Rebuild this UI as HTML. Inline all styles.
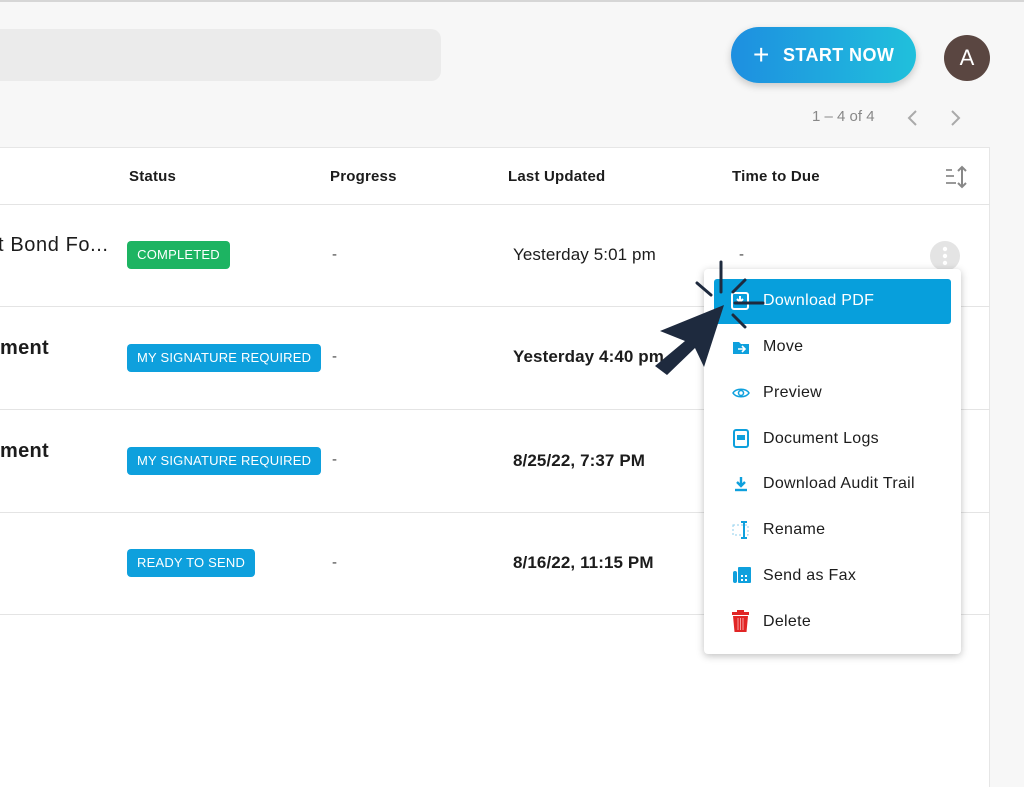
<!DOCTYPE html>
<html><head><meta charset="utf-8"><style>
*{margin:0;padding:0;box-sizing:border-box}
body{width:1024px;height:768px;overflow:hidden;background:#f7f7f7;font-family:"Liberation Sans",sans-serif;color:#1c1c1c;position:relative}
.a{position:absolute}
.topline{left:0;top:0;width:1024px;height:2px;background:#d6d6d6}
.search{left:-10px;top:29px;width:451px;height:52px;background:#ebebeb;border-radius:10px}
.btn{left:731px;top:27px;width:185px;height:56px;border-radius:28px;background:linear-gradient(90deg,#1e8fe0,#20c0dc);box-shadow:0 3px 8px rgba(0,0,0,.2);color:#fff;font-size:18px;font-weight:bold;letter-spacing:.4px;line-height:56px;padding-left:52px;white-space:nowrap}
.plus{left:22px;top:0;font-size:28px;font-weight:normal}
.av{left:944px;top:35px;width:46px;height:46px;border-radius:50%;background:#5a4641;color:#fff;font-size:22px;text-align:center;line-height:46px}
.pg{left:812px;top:108px;font-size:15px;color:#888}
.card{left:0;top:147px;width:990px;height:640px;background:#fff;border-right:1px solid #e6e6e6;border-top:1px solid #e6e6e6}
.hd{top:168px;font-size:15px;font-weight:bold;letter-spacing:.2px}
.line{left:0;width:990px;height:1px;background:#e4e4e4}
.nm{left:0;font-size:20px;font-weight:bold;white-space:nowrap;letter-spacing:.3px}
.tag{height:28px;border-radius:4px;color:#fff;font-size:13px;line-height:28px;padding:0 10px;letter-spacing:.2px;white-space:nowrap;text-align:center}
.dash{font-size:15px;color:#444}
.dt{font-size:17px;font-weight:bold;white-space:nowrap;letter-spacing:.1px}
.menu{left:704px;top:269px;width:257px;height:385px;background:#fff;border-radius:4px;box-shadow:0 2px 8px rgba(0,0,0,.25)}
.mi{left:735px;font-size:16px;white-space:nowrap;letter-spacing:.3px}
.mi span{position:absolute;left:28px;top:0}
.sel{left:714px;top:279px;width:237px;height:45px;background:#079fdc;border-radius:3px}
</style></head><body>
<div class="a topline"></div>
<div class="a search"></div>
<div class="a btn"><span class="a plus">+</span>START NOW</div>
<div class="a av">A</div>
<div class="a pg">1 – 4 of 4</div>
<svg class="a" style="left:900px;top:108px" width="70" height="20"><path d="M16 3 L9 10 L16 17 M52 3 L59 10 L52 17" fill="none" stroke="#aaa" stroke-width="2"/></svg>
<div class="a card"></div>
<div class="a hd" style="left:129px">Status</div>
<div class="a hd" style="left:330px">Progress</div>
<div class="a hd" style="left:508px">Last Updated</div>
<div class="a hd" style="left:732px">Time to Due</div>
<svg class="a" style="left:944px;top:165px" width="26" height="24"><path d="M2 5h6M2 11h8M2 18h10" stroke="#999" stroke-width="2"/><path d="M18 2v20M14 6l4-4 4 4M14 18l4 4 4-4" stroke="#888" stroke-width="2" fill="none"/></svg>
<div class="a line" style="top:204px"></div>
<div class="a line" style="top:306px"></div>
<div class="a line" style="top:409px"></div>
<div class="a line" style="top:512px"></div>
<div class="a line" style="top:614px"></div>

<div class="a nm" style="top:234px;font-weight:normal;left:-2px;letter-spacing:.6px">t Bond Fo...</div>
<div class="a tag" style="left:127px;top:241px;background:#1db462;width:103px">COMPLETED</div>
<div class="a dash" style="left:332px;top:246px">-</div>
<div class="a dt" style="left:513px;top:245px;font-weight:normal">Yesterday 5:01 pm</div>
<div class="a dash" style="left:739px;top:246px">-</div>
<div class="a" style="left:930px;top:241px;width:30px;height:30px;border-radius:50%;background:#e4e4e4"></div>
<svg class="a" style="left:930px;top:241px" width="30" height="30"><circle cx="15" cy="8" r="2.2" fill="#fff"/><circle cx="15" cy="15" r="2.2" fill="#fff"/><circle cx="15" cy="22" r="2.2" fill="#fff"/></svg>

<div class="a nm" style="top:337px">ment</div>
<div class="a tag" style="left:127px;top:344px;background:#0ea0dd;width:194px">MY SIGNATURE REQUIRED</div>
<div class="a dash" style="left:332px;top:348px">-</div>
<div class="a dt" style="left:513px;top:347px">Yesterday 4:40 pm</div>

<div class="a nm" style="top:440px">ment</div>
<div class="a tag" style="left:127px;top:447px;background:#0ea0dd;width:194px">MY SIGNATURE REQUIRED</div>
<div class="a dash" style="left:332px;top:451px">-</div>
<div class="a dt" style="left:513px;top:451px">8/25/22, 7:37 PM</div>

<div class="a tag" style="left:127px;top:549px;background:#0ea0dd;width:128px">READY TO SEND</div>
<div class="a dash" style="left:332px;top:554px">-</div>
<div class="a dt" style="left:513px;top:553px">8/16/22, 11:15 PM</div>

<div class="a menu"></div>
<div class="a sel"></div>
<svg class="a" style="left:731px;top:292px" width="18" height="18"><rect x="1" y="1" width="16" height="16" rx="2" fill="none" stroke="#fff" stroke-width="2"/><path d="M9 4v6M6 7l3 3 3-3" stroke="#fff" stroke-width="2" fill="none"/></svg>
<div class="a mi" style="top:292px;color:#fff"><span>Download PDF</span></div>
<svg class="a" style="left:733px;top:340px" width="16" height="14"><path d="M0 2h6l2 2h8v10H0z" fill="#0ea0dd"/><path d="M5 9h6M9 6l3 3-3 3" stroke="#fff" stroke-width="1.6" fill="none"/></svg>
<div class="a mi" style="top:338px"><span>Move</span></div>
<svg class="a" style="left:732px;top:386px" width="18" height="14"><path d="M1 7C4 2 14 2 17 7C14 12 4 12 1 7z" fill="none" stroke="#0ea0dd" stroke-width="1.5"/><circle cx="9" cy="7" r="2.5" fill="none" stroke="#0ea0dd" stroke-width="1.5"/></svg>
<div class="a mi" style="top:384px"><span>Preview</span></div>
<svg class="a" style="left:733px;top:429px" width="16" height="19"><rect x="1" y="1" width="14" height="17" rx="2" fill="none" stroke="#0ea0dd" stroke-width="2"/><rect x="4" y="6" width="8" height="5" fill="#0ea0dd"/></svg>
<div class="a mi" style="top:430px"><span>Document Logs</span></div>
<svg class="a" style="left:734px;top:476px" width="14" height="16"><path d="M7 1v9M3 6l4 4 4-4" stroke="#0ea0dd" stroke-width="2.4" fill="none"/><path d="M1 14h12" stroke="#0ea0dd" stroke-width="2.4"/></svg>
<div class="a mi" style="top:475px"><span>Download Audit Trail</span></div>
<svg class="a" style="left:732px;top:521px" width="18" height="18"><rect x="1" y="4" width="15" height="10" fill="none" stroke="#8fcfee" stroke-dasharray="2 2"/><path d="M12 1v16M9 1h6M9 17h6" stroke="#0ea0dd" stroke-width="2"/></svg>
<div class="a mi" style="top:521px"><span>Rename</span></div>
<svg class="a" style="left:733px;top:566px" width="18" height="18"><rect x="0" y="5" width="4" height="12" rx="2" fill="#0ea0dd"/><rect x="5" y="1" width="13" height="16" rx="1" fill="#0ea0dd"/><rect x="8" y="9" width="2" height="2" fill="#fff"/><rect x="12" y="9" width="2" height="2" fill="#fff"/><rect x="8" y="13" width="2" height="2" fill="#fff"/><rect x="12" y="13" width="2" height="2" fill="#fff"/></svg>
<div class="a mi" style="top:567px"><span>Send as Fax</span></div>
<svg class="a" style="left:732px;top:610px" width="17" height="23"><rect x="0" y="2" width="17" height="3" fill="#e12525"/><rect x="5" y="0" width="7" height="3" fill="#e12525"/><path d="M1 6h15l-1.5 16h-12z" fill="#e12525"/><path d="M6 8v12M8.5 8v12M11 8v12" stroke="#f6a0a0" stroke-width="1"/></svg>
<div class="a mi" style="top:613px"><span>Delete</span></div>

<svg class="a" style="left:640px;top:255px" width="140" height="125">
<g stroke="#1e2a3e" stroke-width="3" stroke-linecap="round">
<path d="M81 7v30M57 28l14 12M105 25l-12 12M95 48h28M93 60l12 12"/>
</g>
<path d="M84 50L20 76L45 86L15 111L27 120L55 93L64 112Z" fill="#1e2a3e"/>
</svg>
</body></html>
